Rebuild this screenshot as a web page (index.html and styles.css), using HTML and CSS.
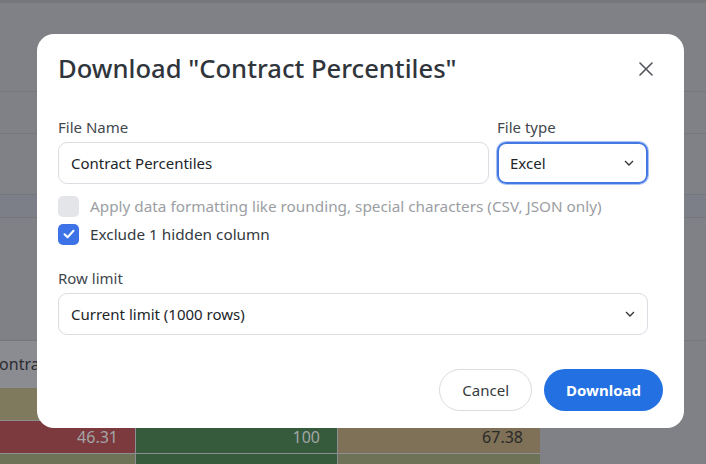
FILE: index.html
```html
<!doctype html>
<html>
	<head>
		<meta charset="utf-8"/>
		<title>Download</title>
		<link rel="stylesheet" href="styles.css">
	</head>
	<body>
		<section class="page">
			<div class="band top"></div>
			<div class="band b1"></div>
			<div class="band b2"></div>
			<div class="band b3"></div>
			<div class="band b4 tint"></div>
			<div class="band b5"></div>
			<div class="grid">
				<div class="th">Contract</div>
				<div class="th th-rest"></div>
				<div class="c tan"></div><div class="c"></div><div class="c"></div>
				<div class="c red light">46.31</div><div class="c green light">100</div><div class="c tan2">67.38</div>
				<div class="c olive"></div><div class="c green"></div><div class="c olive"></div>
			</div>
		</section>

		<div class="backdrop">
			<div class="modal">
				<header class="modal-head">
					<h2>Download "Contract Percentiles"</h2>
					<button class="close" aria-label="Close">
						<svg width="14" height="14" viewBox="0 0 14 14"><path d="M1 1 L13 13 M13 1 L1 13" stroke="#50545a" stroke-width="1.6" stroke-linecap="round" fill="none"/></svg>
					</button>
				</header>

				<div class="modal-body">
					<div class="row">
						<div class="field grow">
							<label>File Name</label>
							<div class="input">Contract Percentiles</div>
						</div>
						<div class="field type">
							<label>File type</label>
							<div class="select focus">
								<span>Excel</span>
								<svg width="10" height="6" viewBox="0 0 10 6"><path d="M1 1 L5 5 L9 1" stroke="#333" stroke-width="1.3" fill="none"/></svg>
							</div>
						</div>
					</div>

					<div class="check disabled">
						<span class="box"></span>
						<span>Apply data formatting like rounding, special characters (CSV, JSON only)</span>
					</div>
					<div class="check">
						<span class="box on">
							<svg width="14" height="14" viewBox="0 0 14 14"><path d="M2.5 7.2 L5.6 10.2 L11.5 3.8" stroke="#fff" stroke-width="2" stroke-linecap="round" stroke-linejoin="round" fill="none"/></svg>
						</span>
						<span>Exclude 1 hidden column</span>
					</div>

					<div class="field limit">
						<label>Row limit</label>
						<div class="select">
							<span>Current limit (1000 rows)</span>
							<svg width="10" height="6" viewBox="0 0 10 6"><path d="M1 1 L5 5 L9 1" stroke="#333" stroke-width="1.3" fill="none"/></svg>
						</div>
					</div>
				</div>

				<footer class="modal-foot">
					<button class="btn cancel">Cancel</button>
					<button class="btn primary">Download</button>
				</footer>
			</div>
		</div>
	</body>
</html>
```

FILE: styles.css
```css
html, body {
	width: 100%;
	height: 100%;
	overflow: hidden;
}
body {
	margin: 0;
	position: relative;
	background-color: #808186;
}
body * {
	box-sizing: border-box;
	font-family: "Noto Sans", "Open Sans", sans-serif;
}

/* dimmed page behind the dialog */
.page {
	display: flex;
	flex-direction: column;
}
.band {
	border-bottom: 1px solid #76777c;
}
.band.top { height: 3px; background-color: #76777b; border: 0; }
.band.b1 { height: 89px; }
.band.b2 { height: 42px; }
.band.b3 { height: 61px; }
.band.b4 { height: 23px; }
.band.tint { background-color: #7c7f87; }
.band.b5 { height: 123px; }

.grid {
	display: grid;
	grid-template-columns: 135px 201px 202px;
	grid-template-rows: 46px;
	grid-auto-rows: 32px;
	column-gap: 1px;
	row-gap: 1px;
	width: 540px;
	background-color: #8d8e92;
}
.th {
	height: 46px;
	background-color: #8b8c91;
	color: #2c2d31;
	font-size: 16px;
	line-height: 46px;
	text-indent: -11px;
	overflow: hidden;
	white-space: nowrap;
}
.th-rest {
	grid-column: span 2;
}
.c {
	background-color: #808186;
	font-size: 16px;
	line-height: 32px;
	text-align: right;
	padding-right: 17px;
	color: #2a2a2a;
}
.c.tan { background-color: #7f7a5d; }
.c.red { background-color: #7c3a3e; }
.c.green { background-color: #355b3c; }
.c.tan2 { background-color: #7e7157; }
.c.olive { background-color: #6e7358; }
.c.light { color: #a3a5a6; }

/* dialog */
.backdrop {
	position: absolute;
	top: 0;
	left: 0;
	right: 0;
	bottom: 0;
	padding: 34px 0 0 37px;
}
.modal {
	width: 647px;
	height: 394px;
	background-color: white;
	border-radius: 17px;
	padding: 19px 21px 17px 21px;
	display: flex;
	flex-direction: column;
	color: #343a40;
}
.modal-head {
	display: flex;
	align-items: center;
	justify-content: space-between;
	height: 32px;
}
.modal-head h2 {
	margin: 0;
	font-size: 25.6px;
	font-weight: 500;
	color: #30353c;
	line-height: 32px;
}
.close {
	width: 26px;
	height: 26px;
	margin-right: 4px;
	border: 0;
	background: none;
	padding: 0;
	display: flex;
	align-items: center;
	justify-content: center;
}

.modal-body {
	padding-right: 15px;
	margin-top: 32px;
}
.row {
	display: flex;
	gap: 8px;
}
.field {
	display: flex;
	flex-direction: column;
}
.field.grow { flex: 1; }
.field.type { width: 151px; }
.field label {
	font-size: 15px;
	line-height: 20px;
	color: #42474e;
	margin-bottom: 5px;
}
.input, .select {
	height: 42px;
	border: 1px solid #dadde2;
	border-radius: 9px;
	padding: 0 12px;
	font-size: 15px;
	color: #212529;
	display: flex;
	align-items: center;
}
.select {
	justify-content: space-between;
	padding-right: 12px;
}
.select.focus {
	border: 2px solid #4479e4;
	box-shadow: 0 0 0 1px rgba(68, 121, 228, 0.45);
	padding-left: 11px;
	padding-right: 12px;
}

.check {
	display: flex;
	align-items: center;
	gap: 11px;
	height: 20px;
	font-size: 15.3px;
	color: #343a40;
}
.row + .check { margin-top: 12px; }
.check + .check { margin-top: 8px; }
.check.disabled { color: #9b9ea3; }
.box {
	width: 21px;
	height: 21px;
	border-radius: 5px;
	background-color: #e4e5e8;
	display: flex;
	align-items: center;
	justify-content: center;
}
.box.on { background-color: #3d73e6; }

.field.limit { margin-top: 24px; }

.modal-foot {
	margin-top: auto;
	display: flex;
	justify-content: flex-end;
	gap: 12px;
}
.btn {
	height: 42px;
	border-radius: 21px;
	font-size: 15px;
	padding: 0 22px;
}
.cancel {
	background-color: white;
	border: 1px solid #d9dce0;
	color: #343a40;
}
.primary {
	background-color: #2270e2;
	border: 0;
	color: white;
	font-weight: 700;
}
```
